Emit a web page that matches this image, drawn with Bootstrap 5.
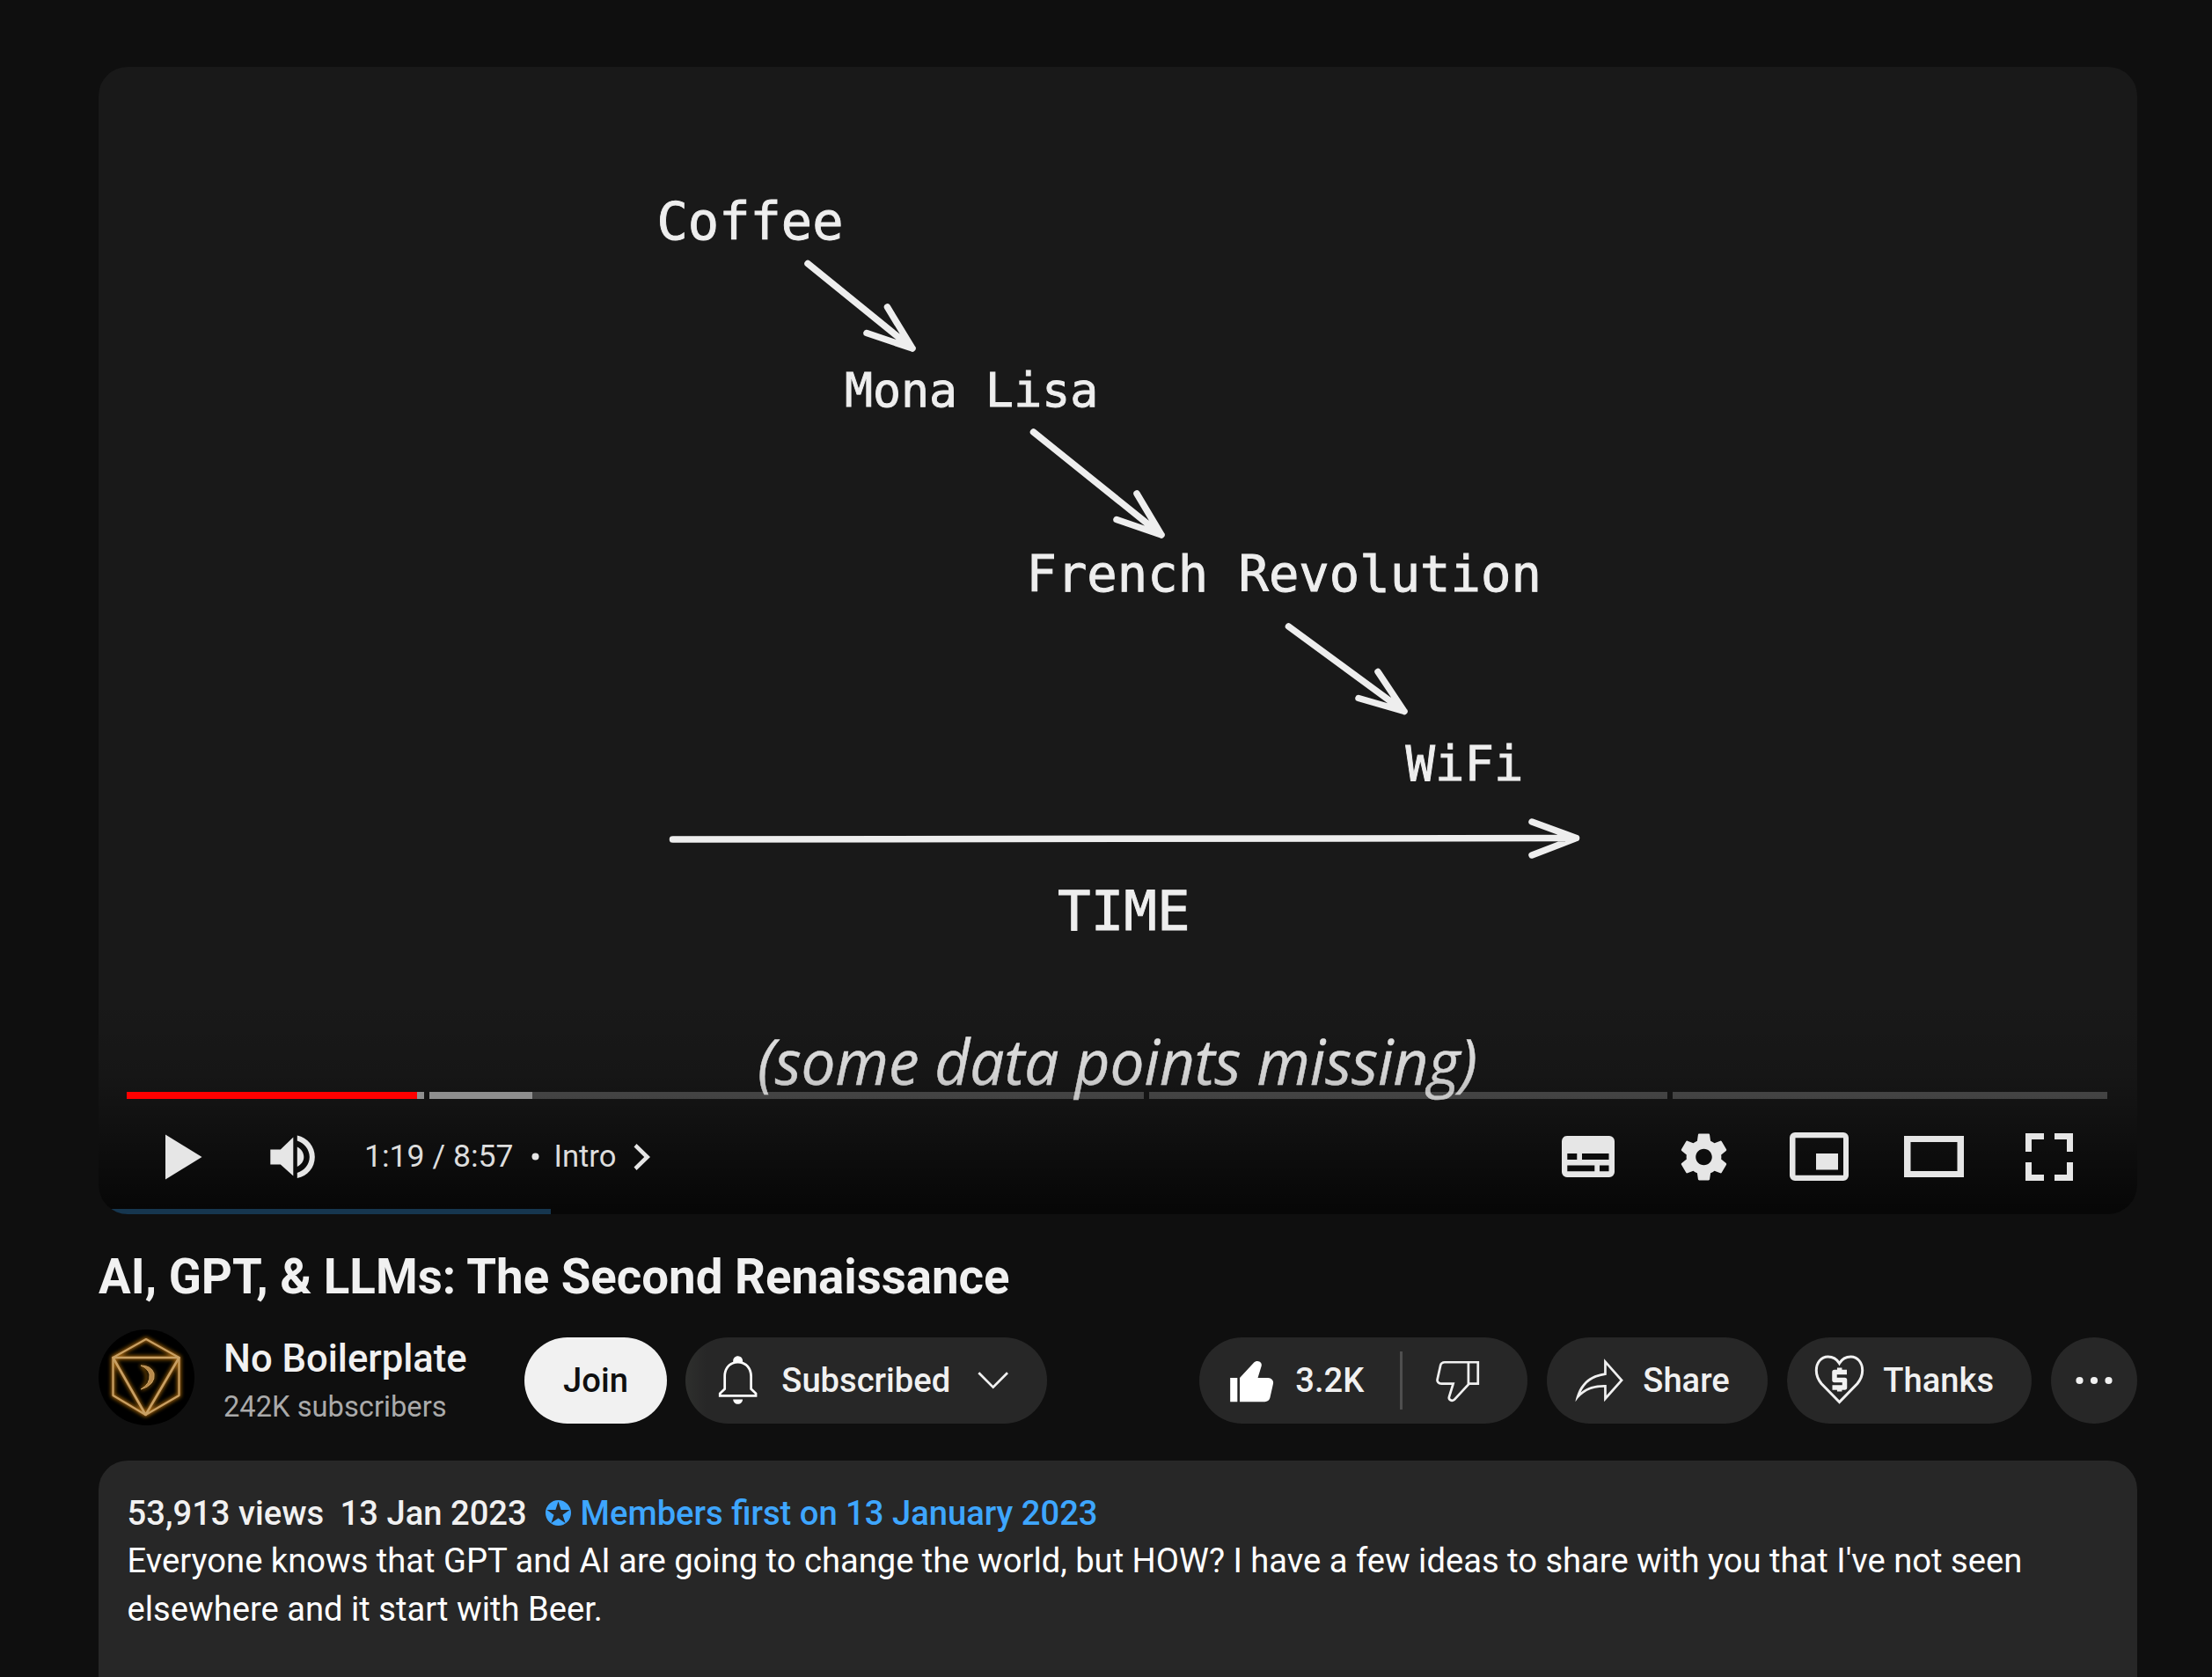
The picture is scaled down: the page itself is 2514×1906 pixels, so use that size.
<!DOCTYPE html>
<html lang="en" data-bs-theme="dark">
<head>
<meta charset="utf-8">
<meta name="viewport" content="width=device-width, initial-scale=1">
<title>AI, GPT, &amp; LLMs: The Second Renaissance</title>
<link href="https://cdn.jsdelivr.net/npm/bootstrap@5.3.0/dist/css/bootstrap.min.css" rel="stylesheet">
<style>
  body { background: #0f0f0f; color: #f1f1f1; font-family: Roboto, "Liberation Sans", sans-serif; font-size: 38.17px; line-height: 54.6px; }
  .watch-page { height: 1906px; padding: 76px 85px 0 112px; }
  svg { display: block; flex: none; }

  .player { height: 1304px; border-radius: 33px; background: #191919; }
  .player-shade { height: 290px; background: linear-gradient(to bottom, rgba(0,0,0,0) 15%, rgba(0,0,0,.12) 45%, rgba(0,0,0,.42) 72%, rgba(0,0,0,.64) 90%, rgba(0,0,0,.74) 100%); }
  .slide-mono { font-family: "DejaVu Sans Mono", monospace; fill: #eee; stroke: #eee; stroke-width: .9px; }
  .slide-note { font-family: "Open Sans", sans-serif; font-style: italic; fill: #eee; stroke: #eee; stroke-width: .5px; }
  .timeline { margin: 0 34px 0 32px; gap: 6px; }
  .chapter { height: 8px; background: rgba(255,255,255,.2); }
  .chapter .played { background: #f00; }
  .chapter .loaded { background: #8f8f8f; }
  .controls { height: 125px; padding: 6px 73px 0 76px; fill: #e6e6e6; color: #ddd; }
  .clock { font-size: 35.6px; margin-left: 56px; }
  .chapter-label { font-size: 34.6px; margin-left: 17px; }
  .watched { height: 6px; width: 514px; background: #16364f; }

  .video-title { font-size: 54.6px; line-height: 76px; margin: 33px 0 22px; font-weight: 700; color: #f1f1f1; }
  .owner-row { height: 109px; }
  .owner-name { font-size: 43.6px; line-height: 54px; font-weight: 500; }
  .owner-subs { font-size: 32.7px; line-height: 54px; color: #aaa; }
  .owner-text { width: 342px; margin-left: 33px; padding-top: 12px; }
  .pill { --bs-btn-border-width: 0; --bs-btn-padding-y: 0; --bs-btn-padding-x: 0; --bs-btn-font-size: 38.17px; --bs-btn-font-weight: 500; --bs-btn-color: #f1f1f1; --bs-btn-bg: #272727; --bs-btn-hover-bg: #3f3f3f; height: 98px; margin-top: 7px; background: #272727; line-height: 54px; fill: #f1f1f1; }
  .pill-join { --bs-btn-color: #0f0f0f; background: #f1f1f1; width: 162px; }
  .pill-sub { width: 411px; margin-left: 21px; padding-left: 27px; background: linear-gradient(to right, #2e2f2d 0, #272727 24px); }
  .pill-like { width: 373px; padding-left: 27px; color: #f1f1f1; font-weight: 500; }
  .pill-share { width: 251px; margin-left: 22px; padding-left: 27px; }
  .pill-thanks { width: 278px; margin-left: 22px; padding-left: 27px; }
  .pill-more { width: 98px; margin-left: 22px; }
  .split { width: 3px; height: 66px; background: #4f4f4f; }

  .about { height: 280px; margin-top: 40px; padding: 32.6px; border-radius: 33px 33px 0 0; background: #272727; }
  .about-meta { font-weight: 500; }
  .members { color: #3ea6ff; fill: #3ea6ff; }
  .about-text { color: #fff; }
</style>
</head>
<body>
<main class="watch-page overflow-hidden">

  <section class="player position-relative overflow-hidden d-flex flex-column justify-content-end">
    <svg class="position-absolute top-0 start-0" width="2316" height="1304" viewBox="112 76 2316 1304">
      <g fill="none" stroke="#eee" stroke-width="7.500" stroke-linecap="round" stroke-linejoin="round">
        <path d="M918 299.500L1037 396M1008.500 349L1037 396L985 378.500"/>
        <path d="M1174.500 491L1320 608M1292 561L1320 608L1269 590.500"/>
        <path d="M1464.500 712L1596 808.500M1566 763.500L1596 808.500L1544 793.500"/>
        <path d="M764.500 954L1791.500 952.500M1741 934L1791.500 952.500L1741 972"/>
      </g>
      <g class="slide-mono">
        <text x="746.500" y="271.500" font-size="58.700">Coffee</text>
        <text x="960" y="462" font-size="53.200">Mona Lisa</text>
        <text x="1166.500" y="672" font-size="57.200">French Revolution</text>
        <text x="1597.500" y="887" font-size="55.600">WiFi</text>
        <text x="1202" y="1056.500" font-size="62.500">TIME</text>
      </g>
      <text class="slide-note" x="861" y="1233" font-size="70.500" textLength="818" lengthAdjust="spacingAndGlyphs">(some data points missing)</text>
    </svg>
    <div class="player-shade position-absolute bottom-0 start-0 w-100"></div>

    <div class="timeline position-relative d-flex">
      <div class="chapter d-flex" style="width:338px"><div class="played" style="width:330px"></div><div class="loaded flex-fill"></div></div>
      <div class="chapter d-flex" style="width:812px"><div class="loaded" style="width:117px"></div></div>
      <div class="chapter" style="width:589px"></div>
      <div class="chapter flex-fill"></div>
    </div>

    <div class="controls position-relative d-flex align-items-center">
      <svg width="42" height="52" viewBox="188 1288.500 42 52"><path d="M188 1289L229.500 1314.500L188 1340Z"/></svg>
      <svg style="margin-left:77px" width="51" height="50" viewBox="306.700 1289.500 51 50"><path d="M307 1306h11.500L333 1292v44L318.500 1323H307ZM337.500 1303c5 2.500 7.500 7 7.500 11.500s-2.500 8.500-7.500 11ZM337.500 1290c12 2.800 20 12.500 20 24.500s-8 21.500-20 24v-6c8-2.500 14-9.500 14-18s-6-16-14-18.500Z"/></svg>
      <span class="clock">1:19 / 8:57</span>
      <svg style="margin-left:20px" width="9" height="9" viewBox="0 0 9 9"><circle cx="4.500" cy="4.500" r="4"/></svg>
      <span class="chapter-label">Intro</span>
      <svg style="margin-left:20px" width="20" height="32" viewBox="0 0 20 32"><path d="M3.500 1L19 16L3.500 31L.500 27.500L12.200 16L.500 4.500Z"/></svg>

      <svg class="ms-auto" width="60" height="47" viewBox="1775 1291 60 47"><path fill-rule="evenodd" d="M1781 1291h48a6 6 0 0 1 6 6v35a6 6 0 0 1-6 6h-48a6 6 0 0 1-6-6v-35a6 6 0 0 1 6-6ZM1781.300 1311v7h11v-7ZM1798 1311v7h30.500v-7ZM1781.300 1324.500v6.700h31v-6.700ZM1818 1324.500v6.700h10.500v-6.700Z"/></svg>
      <svg style="margin-left:75px" width="53" height="54" viewBox="10 9.900 16 16.200"><path d="m23.940 18.780c.03-.25.05-.51.05-.78 0-.27-.02-.52-.05-.78l1.680-1.320c.15-.12.19-.33.09-.51l-1.600-2.760c-.09-.17-.31-.24-.48-.17l-1.990.8c-.41-.32-.86-.58-1.350-.78l-.30-2.120c-.02-.19-.19-.33-.39-.33l-3.200 0c-.2 0-.36.14-.39.33l-.30 2.120c-.48.2-.93.47-1.350.78l-1.990-.8c-.18-.07-.39 0-.48.17l-1.600 2.760c-.10.17-.05.39.09.51l1.680 1.320c-.03.25-.05.52-.05.78 0 .26.02.52.05.78l-1.680 1.320c-.15.12-.19.33-.09.51l1.600 2.760c.09.17.31.24.48.17l1.990-.8c.41.32.86.58 1.350.78l.30 2.120c.02.19.19.33.39.33l3.200 0c.2 0 .36-.14.39-.33l.30-2.120c.48-.2.93-.47 1.350-.78l1.990.8c.18.07.39 0 .48-.17l1.600-2.760c.09-.17.05-.39-.09-.51l-1.680-1.320zm-5.940 2.010c-1.540 0-2.800-1.250-2.800-2.800 0-1.540 1.250-2.800 2.800-2.800 1.540 0 2.800 1.250 2.800 2.800 0 1.540-1.250 2.800-2.800 2.800z"/></svg>
      <svg style="margin-left:71px" width="67" height="55" viewBox="2034 1287 67 55"><path fill-rule="evenodd" d="M2040 1287h55a6 6 0 0 1 6 6v43a6 6 0 0 1-6 6h-55a6 6 0 0 1-6-6v-43a6 6 0 0 1 6-6ZM2040.500 1293.300v42.500h54.500v-42.500ZM2064 1311h25v18.500h-25Z"/></svg>
      <svg style="margin-left:63px" width="68" height="47" viewBox="2164 1291 68 47"><path fill-rule="evenodd" d="M2164 1291h68v47h-68ZM2171.500 1298v33h53v-33Z"/></svg>
      <svg style="margin-left:70px" width="54" height="54" viewBox="0 0 54 54"><path d="M0 0h21v7H7v14H0ZM33 0h21v21h-7V7H33ZM0 33h7v14h14v7H0ZM47 33h7v21H33v-7h14Z"/></svg>
    </div>
    <div class="watched position-relative"></div>
  </section>

  <h1 class="video-title">AI, GPT, &amp; LLMs: The Second Renaissance</h1>

  <section class="owner-row d-flex align-items-center">
    <svg width="109" height="109" viewBox="112 1511 109 109">
      <defs><filter id="glow" x="-20%" y="-20%" width="140%" height="140%"><feGaussianBlur stdDeviation="2"/></filter></defs>
      <circle cx="166.500" cy="1565.500" r="54.500" fill="#000"/>
      <g fill="none" stroke="#a06410" stroke-width="4.500" stroke-linejoin="round" filter="url(#glow)">
        <path d="M166 1522L203.500 1543V1586L165.500 1608L128.500 1586V1543ZM128.500 1543H203.500L165.500 1608Z"/>
        <path d="M160 1552q13 13 1 27q16-5 14-18q-3-8-15-9Z" stroke-width="2"/>
      </g>
      <g fill="none" stroke="#c9a063" stroke-width="2.200" stroke-linejoin="round">
        <path d="M166 1522L203.500 1543V1586L165.500 1608L128.500 1586V1543Z"/>
        <path d="M128.500 1543H203.500L165.500 1608Z" stroke-width="2.600"/>
        <path d="M160 1552q12 0 15 9q2 13-15 18q11-6 10-17q-2-7-10-10Z" fill="#b98a4b" stroke-width="1"/>
      </g>
    </svg>
    <div class="owner-text">
      <div class="owner-name">No Boilerplate</div>
      <div class="owner-subs">242K subscribers</div>
    </div>
    <button class="btn pill pill-join rounded-pill">Join</button>
    <button class="btn pill pill-sub rounded-pill d-flex align-items-center">
      <svg width="65.300" height="65.300" viewBox="0 0 24 24" fill="#fff"><path d="M10 20h4c0 1.100-.9 2-2 2s-2-.9-2-2zm10-2.650V19H4v-1.650l2-1.880v-5.150C6 7.400 7.560 5.100 10 4.340v-.38c0-1.420 1.490-2.500 2.990-1.760.65.32 1.010 1.030 1.010 1.760v.39c2.440.75 4 3.060 4 5.980v5.150l2 1.870zm-1 .42-2-1.880v-5.470c0-2.470-1.190-4.360-3.130-5.100-1.260-.53-2.640-.5-3.840.03C8.150 6.110 7 7.990 7 10.420v5.470l-2 1.880V18h14v-.23z"/></svg>
      <span style="margin-left:17px">Subscribed</span>
      <svg style="margin-left:17px" width="65.300" height="65.300" viewBox="0 0 24 24"><path d="m18 9.280-6.350 6.350-6.370-6.350.72-.71 5.640 5.650 5.650-5.650z"/></svg>
    </button>

    <div class="pill pill-like rounded-pill d-flex align-items-center ms-auto">
      <svg width="65.300" height="65.300" viewBox="0 0 24 24" fill="#fff"><path d="M3 11h3v10H3V11zM18.770 11h-4.230l1.520-4.940C16.380 5.030 15.540 4 14.380 4c-.58 0-1.140.24-1.520.65L7 11v10h10.430c1.060 0 1.980-.67 2.190-1.610l1.340-6C21.230 12.150 20.180 11 18.770 11z"/></svg>
      <span style="margin-left:17px;width:119px">3.2K</span>
      <div class="split"></div>
      <svg style="margin-left:30px" width="65.300" height="65.300" viewBox="0 0 24 24"><path d="M17 4h-1H6.570C5.500 4 4.590 4.670 4.380 5.610l-1.340 6C2.770 12.850 3.820 14 5.230 14h4.230l-1.520 4.940C7.620 19.970 8.460 21 9.620 21c.58 0 1.140-.24 1.520-.65L17 14h4V4H17zM10.400 19.670C10.210 19.880 9.920 20 9.620 20c-.26 0-.5-.11-.63-.3-.07-.1-.15-.26-.09-.47l1.520-4.940.4-1.290H9.460 5.230c-.41 0-.8-.17-1.030-.46-.12-.15-.25-.4-.18-.72l1.340-6C5.460 5.350 5.970 5 6.570 5H16v8.610L10.400 19.670zM20 13h-3V5h3V13z"/></svg>
    </div>
    <button class="btn pill pill-share rounded-pill d-flex align-items-center">
      <svg width="65.300" height="65.300" viewBox="0 0 24 24"><path d="M15 5.630L20.660 12L15 18.370V15v-1h-1c-3.960 0-7.140 1-9.750 3.090c1.840-4.070 5.110-6.400 9.890-7.100L15 9.860V9V5.630M14 3v6C6.220 10.130 3.110 15.330 2 21c2.780-3.970 6.440-6 12-6v6l8-9L14 3z"/></svg>
      <span style="margin-left:17px">Share</span>
    </button>
    <button class="btn pill pill-thanks rounded-pill d-flex align-items-center">
      <svg width="65.300" height="65.300" viewBox="2058 1536.500 65.300 65.300" fill="none" stroke="#f1f1f1"><path stroke-width="3" d="M2090.500 1594L2070 1573C2066 1568 2064.300 1563 2064.300 1558C2064.300 1549 2070 1542.500 2077.500 1542.500C2083 1542.500 2087.500 1545 2090.500 1550C2093.500 1545 2098 1542.500 2103.500 1542.500C2111 1542.500 2116.700 1549 2116.700 1558C2116.700 1563 2115 1568 2111 1573Z"/><path stroke-width="5.500" stroke-linejoin="round" d="M2099 1560H2085V1569H2096.500V1577.500H2082.500M2090.700 1555V1560M2090.700 1578V1582"/></svg>
      <span style="margin-left:17px">Thanks</span>
    </button>
    <button class="btn pill pill-more rounded-circle d-flex align-items-center justify-content-center">
      <svg width="42" height="10" viewBox="0 0 42 10"><circle cx="4.500" cy="5" r="4.100"/><circle cx="21" cy="5" r="4.100"/><circle cx="37.500" cy="5" r="4.100"/></svg>
    </button>
  </section>

  <section class="about">
    <div class="about-meta d-flex align-items-center">
      <span style="width:242px">53,913 views</span>
      <span style="width:233px">13 Jan 2023</span>
      <span class="members d-flex align-items-center">
        <svg width="29" height="29" viewBox="0 0 29 29"><path fill-rule="evenodd" d="M14.500 0a14.500 14.500 0 1 0 0 29a14.500 14.500 0 1 0 0-29ZM14.500 1.500L17.600 11H27.500L19.500 16.800L22.500 26L14.500 20.500L6.500 26L9.500 16.800L1.500 11H11.400Z"/></svg>
        <span style="margin-left:11px">Members first on 13 January 2023</span>
      </span>
    </div>
    <div class="about-text">Everyone knows that GPT and AI are going to change the world, but HOW? I have a few ideas to share with you that I've not seen<br>elsewhere and it start with Beer.</div>
  </section>
</main>
<script src="https://cdn.jsdelivr.net/npm/bootstrap@5.3.0/dist/js/bootstrap.bundle.min.js"></script>
</body>
</html>
